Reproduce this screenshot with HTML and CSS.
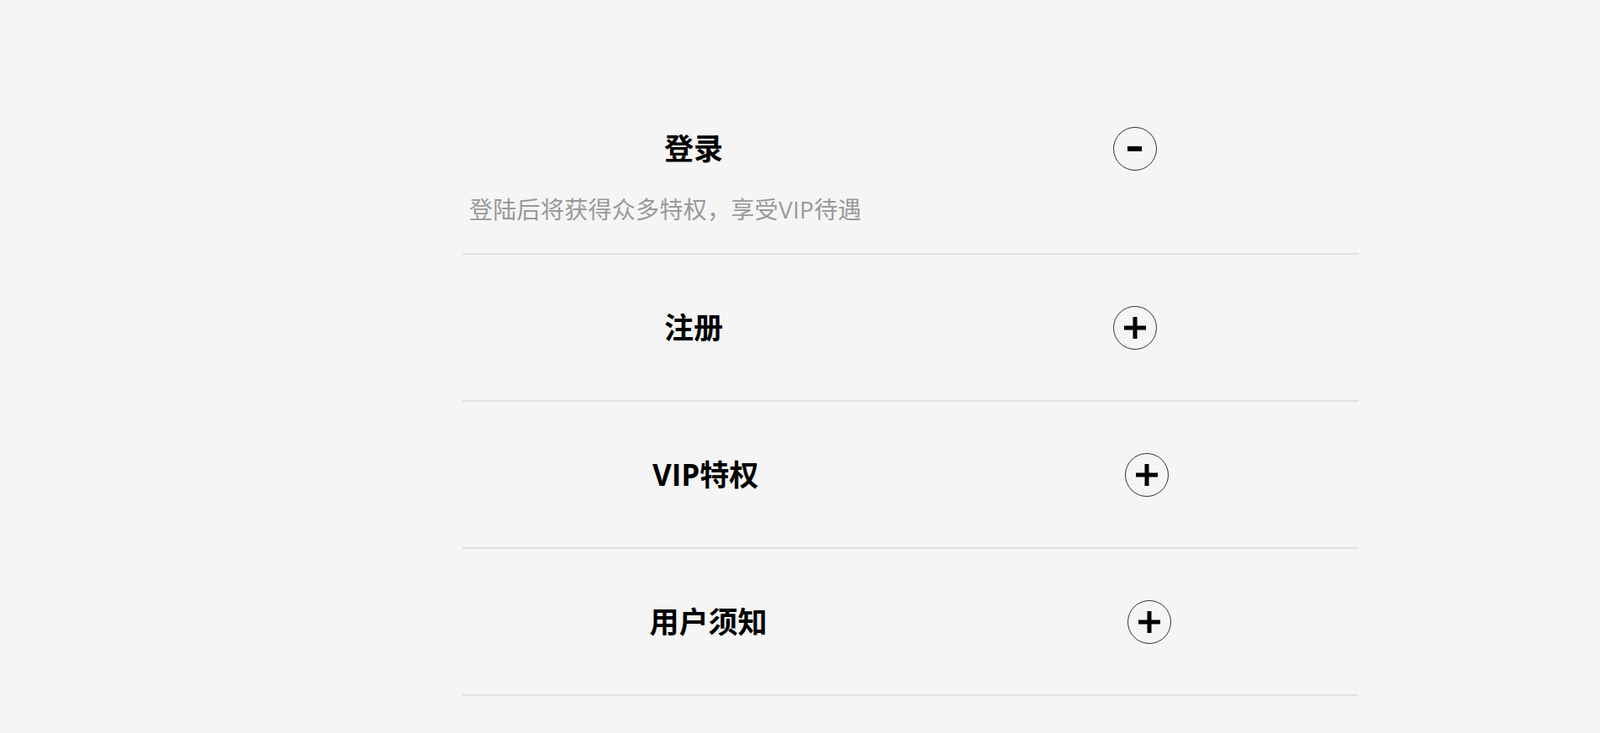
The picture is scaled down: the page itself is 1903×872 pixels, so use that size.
FILE: index.html
```html
<!DOCTYPE html>
<html lang="zh-CN">
<head>
  <meta charset="UTF-8" />
  <meta name="viewport" content="width=device-width, initial-scale=1.0"/>
  <title>会员中心</title>
  <link rel="stylesheet" href="styles.css">
</head>
<body>
  <div class="accordion">
    <div class="item open">
      <div class="item-head">
        <h3 class="item-title">登录</h3>
        <span class="toggle">
          <svg width="17" height="6" viewBox="0 0 17 6"><rect x="0" y="0" width="17" height="6" fill="#000"/></svg>
        </span>
      </div>
      <p class="item-body">登陆后将获得众多特权，享受VIP待遇</p>
    </div>

    <div class="item">
      <div class="item-head">
        <h3 class="item-title">注册</h3>
        <span class="toggle">
          <svg width="28" height="28" viewBox="0 0 28 28"><rect x="11.5" y="1" width="5" height="26" fill="#000"/><rect x="1" y="11.5" width="26" height="5" fill="#000"/></svg>
        </span>
      </div>
    </div>

    <div class="item">
      <div class="item-head">
        <h3 class="item-title">VIP特权</h3>
        <span class="toggle">
          <svg width="28" height="28" viewBox="0 0 28 28"><rect x="11.5" y="1" width="5" height="26" fill="#000"/><rect x="1" y="11.5" width="26" height="5" fill="#000"/></svg>
        </span>
      </div>
    </div>

    <div class="item">
      <div class="item-head">
        <h3 class="item-title">用户须知</h3>
        <span class="toggle">
          <svg width="28" height="28" viewBox="0 0 28 28"><rect x="11.5" y="1" width="5" height="26" fill="#000"/><rect x="1" y="11.5" width="26" height="5" fill="#000"/></svg>
        </span>
      </div>
    </div>
  </div>
</body>
</html>
```

FILE: styles.css
```css
body {
  font-family: 'Open Sans', 'Noto Sans CJK SC', sans-serif;
  background-color: #f5f5f5;
  color: #000;
  margin: 0;
  padding: 0;
}

.accordion {
  width: 1066px;
  margin: 91px 0 0 550px;
}

.item {
  padding: 0 8px;
  border-bottom: 2px solid #e2e2e2;
}

.item-head {
  height: 173px;
  display: flex;
  justify-content: space-around;
  align-items: center;
}

.item.open .item-head {
  height: 112px;
  align-items: flex-start;
  padding-top: 60px;
  box-sizing: border-box;
}

.item-title {
  margin: 0;
  font-size: 35px;
  font-weight: 700;
  line-height: 52px;
}

.toggle {
  width: 52px;
  height: 52px;
  box-sizing: border-box;
  border: 1.5px solid #333;
  border-radius: 50%;
  display: flex;
  align-items: center;
  justify-content: center;
}

.item-body {
  margin: 26px 0 0;
  padding-bottom: 32px;
  font-size: 28px;
  line-height: 40px;
  color: #999;
  letter-spacing: 0.3px;
}
```
